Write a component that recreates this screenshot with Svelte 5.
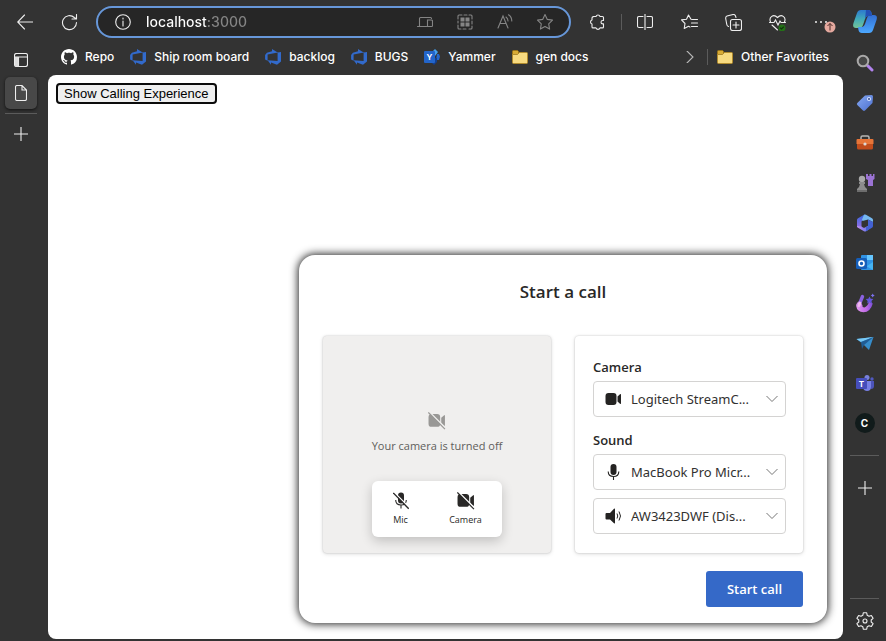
<script>
  const favorites = [
    { name: 'Repo', icon: 'github' },
    { name: 'Ship room board', icon: 'devops' },
    { name: 'backlog', icon: 'devops' },
    { name: 'BUGS', icon: 'devops' },
    { name: 'Yammer', icon: 'yammer' },
    { name: 'gen docs', icon: 'folder' }
  ];
  const apps = ['Search', 'Shopping', 'Tools', 'Games', 'Microsoft 365', 'Outlook', 'Designer', 'Drop', 'Teams', 'Custom app'];
</script>

{#snippet folder()}
  <svg width="16" height="16" viewBox="0 0 16 16"><path d="M.5 2.5q0-1 1-1h4l1 1v3h-6z" fill="#d8ab35" stroke="#9b7417" /><path d="M.5 5.5h5l2-2h7q1 0 1 1v9q0 1-1 1h-13q-1 0-1-1z" fill="#f7da80" stroke="#b08a2c" /></svg>
{/snippet}

{#snippet favicon(kind)}
  {#if kind === 'github'}
    <svg width="16" height="16" viewBox="0 0 16 16"><path fill="#fff" d="M8 0C3.58 0 0 3.58 0 8c0 3.54 2.29 6.53 5.47 7.59.4.07.55-.17.55-.38 0-.19-.01-.82-.01-1.49-2.01.37-2.53-.49-2.69-.94-.09-.23-.48-.94-.82-1.13-.28-.15-.68-.52-.01-.53.63-.01 1.08.58 1.23.82.72 1.21 1.87.87 2.33.66.07-.52.28-.87.51-1.07-1.78-.2-3.64-.89-3.64-3.95 0-.87.31-1.59.82-2.15-.08-.2-.36-1.02.08-2.12 0 0 .67-.21 2.2.82.64-.18 1.32-.27 2-.27s1.36.09 2 .27c1.53-1.04 2.2-.82 2.2-.82.44 1.1.16 1.92.08 2.12.51.56.82 1.27.82 2.15 0 3.07-1.87 3.75-3.65 3.95.29.25.54.73.54 1.48 0 1.07-.01 1.93-.01 2.2 0 .21.15.46.55.38A8.01 8.01 0 0 0 16 8c0-4.42-3.58-8-8-8z" /></svg>
  {:else if kind === 'devops'}
    <svg width="16" height="16" viewBox="0 0 16 16"><path fill="#326acb" d="M16 3v9.500L12 15.800l-6-2.200v2.100l-3.400-4.500 10 .8V3.400zM12.700 3.500 7 0v2.300L1.900 3.800.1 5.900v4.700l2.500 1.100V5.500z" /></svg>
  {:else if kind === 'yammer'}
    <svg width="16" height="16" viewBox="0 0 16 16"><path d="M11 0l3 3-3 4-3-4z" fill="#45a0ee" /><path d="M13 5h2l1 2.500-1 3.500h-3z" fill="#2566c8" /><path d="M7 9h6v4l-3 3-2-2z" fill="#123f91" /><rect y="2" width="11" height="12" rx="1" fill="#2365ca" /><text x="5.500" y="11" text-anchor="middle" fill="#fff" font-family="Inter" font-weight="700" font-size="8">Y</text></svg>
  {:else}
    {@render folder()}
  {/if}
{/snippet}

{#snippet plus()}
  <svg width="14" height="14" viewBox="0 0 14 14" class="line"><path d="M7 0v14M0 7h14" /></svg>
{/snippet}

{#snippet cameraBody()}
  <path d="M3.500 2h5q3 0 3 3v6q0 3-3 3h-5q-3 0-3-3V5q0-3 3-3zM12.500 5.500l2.500-2.300q1-.8 1 .5v8.600q0 1.300-1 .5l-2.500-2.300z" />
{/snippet}

{#snippet cameraOff(back)}
  <svg width="18" height="18" viewBox="0 0 17 17" fill="currentColor">{@render cameraBody()}<path d="M1.300 0 17 15.700" stroke={back} stroke-width="1.500" /><path d="M.3.500 16 16.200" stroke="currentColor" stroke-width="1.200" /></svg>
{/snippet}

{#snippet micShape()}
  <rect x="5" y="0" width="6" height="11" rx="3" /><path d="M2.700 7.500q0 5 5.300 5t5.300-5M8 12.500V16" fill="none" stroke="currentColor" stroke-width="1.100" />
{/snippet}

{#snippet appIcon(i)}
  {#if i === 0}
    <svg width="18" height="18" viewBox="0 0 18 18"><path d="m11.500 11.500 4.500 4.500" stroke="#b283ee" stroke-width="3" stroke-linecap="round" /><circle cx="7" cy="7" r="5.300" fill="#474747" stroke="#aaa9a9" stroke-width="2" /></svg>
  {:else if i === 1}
    <svg width="18" height="18" viewBox="0 0 18 18"><path d="M9 1.500 15.500 1q1.500 0 1.500 1.500L16.500 9 9 16.500q-1 .8-2 0L1.300 11q-1-1 0-2z" fill="url(#tag)" /><circle cx="13" cy="5" r="2" fill="#d9e4ff" /><circle cx="13" cy="5" r="1" fill="#344b8c" /></svg>
  {:else if i === 2}
    <svg width="18" height="18" viewBox="0 0 18 18"><path d="M5 5V3.500Q5 2 6.500 2h5Q13 2 13 3.500V5" fill="none" stroke="#b8b6b4" stroke-width="1.500" /><path d="M1.500 5h15q1 0 1 1v4H.5V6q0-1 1-1z" fill="#e77538" /><path d="M1 10h16v4q0 1.500-1.500 1.500h-13Q1 15.500 1 14z" fill="#c24d1c" /><circle cx="9" cy="10" r="1.600" fill="#dedad7" /></svg>
  {:else if i === 3}
    <svg width="20" height="20" viewBox="0 0 20 20"><path d="M11 1h2v2h1.500V1h2v2H18V1h1.500v5l-1.500 1v6h-5V7l-2-1z" fill="#9b73d4" /><circle cx="7" cy="6" r="3.200" fill="#a9a9a9" /><path d="M4 9h6v2H9l1 3 2 2v3H2v-3l2-2 1-3H4z" fill="#8c8c8c" /><path d="M2 17h10v2H2z" fill="#6d6d6d" /></svg>
  {:else if i === 4}
    <svg width="18" height="18" viewBox="0 0 18 18"><path d="M8.500.5 2 4.200Q1 4.800 1 6v7l4.500 1.500V8q0-1.200 1-1.800L11 3.500z" fill="url(#m365a)" /><path d="M8 .7q1-.5 2 0L16 4.200q1 .6 1 1.800v2l-5-2.500L6.500 7 6 5.500z" fill="#75b8f0" /><path d="M1 12q0 1.200 1 1.800L8 17.300q1 .5 2 0l2.500-1.500-.5-4L9 13.500q-1 .5-2 0L5.500 12.500z" fill="url(#m365b)" /><path d="m12 5.500 5 2.500v4q0 1.200-1 1.800l-6 3.500v-4l2-1.300z" fill="#4361d3" /></svg>
  {:else if i === 5}
    <svg width="18" height="18" viewBox="0 0 18 18"><rect x="5" y="1" width="12" height="15" rx="1" fill="#3093e4" /><path d="M11 1h6v5h-6z" fill="#65c6ff" /><path d="m5 9 12 7V8l-6 4z" fill="#45b3f3" /><rect y="4" width="11" height="11" rx="1.500" fill="#155eb9" /><circle cx="5.500" cy="9.500" r="2.500" fill="none" stroke="#fff" stroke-width="1.600" /></svg>
  {:else if i === 6}
    <svg width="20" height="20" viewBox="0 0 20 20"><path d="M4 8.500Q1 10 1.200 13q.8 6 7.300 6.300 7-.3 9.300-8.800l-3.800-2q-1 4.500-4.500 6Q7 14.500 7.500 12z" fill="url(#design)" /><path d="M7.500 3.500 4 12" stroke="#8b62e0" stroke-width="3.400" stroke-linecap="round" /><path d="m4.800 10.300-.8 2" stroke="#f0b8ef" stroke-width="3.400" stroke-linecap="round" /><path d="m14.500 3.500 1.200 2.200 2.600.3-1.800 2 .5 2.500-2.500-1.200-2.300 1.200.4-2.500-1.900-2 2.600-.3z" fill="#6356dc" /><path d="m17.700.5.7 1.300 1.300.7-1.300.7-.7 1.300-.7-1.300-1.300-.7 1.300-.7z" fill="#7b71ee" /></svg>
  {:else if i === 7}
    <svg width="18" height="18" viewBox="0 0 18 18"><path d="M.5 5 17.500 3 13 16 7 10z" fill="#368dcb" /><path d="M.5 5 17.500 3 5 8z" fill="#79c9f5" /><path d="M5 8 17.500 3 8 11l-2 4z" fill="#205c94" /></svg>
  {:else if i === 8}
    <svg width="18" height="18" viewBox="0 0 18 18"><circle cx="11" cy="3.500" r="2.500" fill="#7881dc" /><circle cx="16" cy="5" r="1.700" fill="#5059c0" /><path d="M7 7h8v6q0 4-4 4-3 0-4-3z" fill="#7880e5" /><path d="M15 7h3v5q0 3-3 3z" fill="#4c54b9" /><rect y="4" width="11" height="11" rx="1" fill="#464ebb" /><text x="5.500" y="12.500" text-anchor="middle" fill="#fff" font-family="Inter" font-weight="700" font-size="8">T</text></svg>
  {:else}
    <span class="letter">C</span>
  {/if}
{/snippet}

<div class="browser">
  <svg class="defs" width="0" height="0" aria-hidden="true">
    <defs>
      <linearGradient id="tag" x2="1" y2="1"><stop stop-color="#86a9f2" /><stop offset="1" stop-color="#4d70cf" /></linearGradient>
      <linearGradient id="m365a" x2="0" y2="1"><stop stop-color="#3566dd" /><stop offset="1" stop-color="#9b70e6" /></linearGradient>
      <linearGradient id="m365b" x2="1" y2="0"><stop stop-color="#c190ef" /><stop offset="1" stop-color="#6674ed" /></linearGradient>
      <linearGradient id="design" x2="1" y2="0"><stop stop-color="#e39af0" /><stop offset=".6" stop-color="#c06ae6" /><stop offset="1" stop-color="#7b4fd6" /></linearGradient>
      <linearGradient id="cop1" x2="0" y2="1"><stop stop-color="#2d79cf" /><stop offset=".5" stop-color="#40aaba" /><stop offset="1" stop-color="#75c496" /></linearGradient>
      <linearGradient id="cop2" x2="0" y2="1"><stop stop-color="#326ed2" /><stop offset="1" stop-color="#4ca8ff" /></linearGradient>
    </defs>
  </svg>

  <div class="main">
    <header class="toolbar">
      <button class="tool" aria-label="Back"><svg width="16" height="16" viewBox="0 0 16 16" class="line"><path d="M7.500 1 .7 8l6.800 7M.7 8H16" /></svg></button>
      <button class="tool" aria-label="Refresh"><svg width="17" height="17" viewBox="0 0 17 17" class="line"><path d="M15.500 8.500a7 7 0 1 1-2.200-5L15.500 5M15.500.5V5H11" /></svg></button>
      <div class="address">
        <svg width="16" height="16" viewBox="0 0 16 16" class="line"><circle cx="8" cy="8" r="7.300" /><path d="M8 7v5M8 4v1" /></svg>
        <input aria-label="Address" value="localhost:3000" spellcheck="false" />
        <button aria-label="Send to device"><svg width="16" height="16" viewBox="0 0 16 16" class="line"><path d="M2.500 12V4.500q0-1 1-1h10q1 0 1 1M.5 12.500h9M10.500 6h4q1 0 1 1v5q0 .5-1 .5h-4z" /></svg></button>
        <button aria-label="QR code"><svg width="16" height="16" viewBox="0 0 16 16" class="line"><path d="M1 5V2q0-1 1-1h3M7 1h3M12 1h2q1 0 1 1v3M15 7v3M15 12v2q0 1-1 1h-2M9 15H6M4 15H2q-1 0-1-1v-3M1 9V7" /><path d="M3.500 3.500h4v4h-4zM8.500 3.500h4v4h-4zM3.500 8.500h4v4h-4zM8.500 8.500h4v4h-4z" fill="currentColor" stroke="none" /></svg></button>
        <button aria-label="Read aloud"><svg width="16" height="16" viewBox="0 0 16 16" class="line"><path d="m1 14 5-12 5 12M3 9.500h6M9 3q2 1.500 2 4M11.500.8Q14.800 3 14.800 7" /></svg></button>
        <button aria-label="Add favorite"><svg width="18" height="18" viewBox="0 0 18 18" class="line"><path d="m9 1.500 2.300 4.900 5.200.7-3.800 3.700.9 5.300L9 13.500l-4.600 2.600.9-5.300L1.500 7.100l5.200-.7z" stroke-linejoin="round" /></svg></button>
      </div>
      <div class="actions">
        <button class="tool narrow" aria-label="Extensions"><svg width="16" height="16" viewBox="0 0 16 16" class="line"><path d="M3 2.500h3a2.100 2.100 0 0 1 4 0h2.500q1 0 1 1v3h-.8a1.700 1.700 0 0 0 0 3.400h.8v3q0 1-1 1H10a2.100 2.100 0 0 1-4 0H3q-1 0-1-1v-3a2.100 2.100 0 0 1 0-4v-2q0-1 1-1z" stroke-linejoin="round" /></svg></button>
        <i class="bar"></i>
        <button class="tool" aria-label="Split screen"><svg width="16" height="16" viewBox="0 0 16 16" class="line"><path d="M8 0v16M6 2.500H2q-1.500 0-1.500 1.500v8q0 1.500 1.500 1.500h4M10 2.500h4q1.500 0 1.500 1.500v8q0 1.500-1.500 1.500h-4" /></svg></button>
        <button class="tool" aria-label="Favorites"><svg width="17" height="17" viewBox="0 0 17 17" class="line"><path d="M16.500 5.500h-5L10 5.200 7.500 1 5.500 5.200l-5 .7L4 9.500l-.8 5 4.300-2.300L9 13M10.500 9h6M10.500 12.500h6" stroke-linejoin="round" /></svg></button>
        <button class="tool" aria-label="Collections"><svg width="17" height="17" viewBox="0 0 17 17" class="line"><rect x="5.500" y="5.500" width="11" height="11" rx="2" /><path d="M11 8v6M8 11h6M3.500 12.500q-1.500-.5-1.700-2L.7 4.500Q.5 2.500 2 2l6-1.500q1.700-.2 2.300 1L11 3.500" /></svg></button>
        <button class="tool" aria-label="Browser essentials"><svg width="17" height="17" viewBox="0 0 17 17" class="line"><path d="M1.500 8C-.5 3 4.500-.5 8.500 3.500c4-4 9-.5 7 4.500M3 11l5.500 5M.5 8.500H5L6.500 6l2.500 5 2-4 1 1.500h4.500" /><circle cx="13" cy="14" r="3.500" fill="#247018" stroke="none" /><path d="m11.500 14 1 1 2-2" stroke="#10350b" /></svg></button>
        <button class="tool" aria-label="Settings and more"><svg width="30" height="24" viewBox="0 0 30 24"><g fill="#eee"><circle cx="10" cy="12" r="1" /><circle cx="15" cy="12" r="1" /><circle cx="20" cy="12" r="1" /></g><circle cx="24" cy="17" r="5.500" fill="#e5a99f" /><path d="M24 20.500v-7m-2.500 2.500 2.500-2.500 2.500 2.500" fill="none" stroke="#4d2a26" /></svg></button>
      </div>
    </header>

    <div class="body">
      <nav class="tabs" aria-label="Tabs">
        <button class="tabmenu" aria-label="Tab actions"><svg width="14" height="14" viewBox="0 0 14 14" class="line"><rect x=".5" y=".5" width="13" height="13" rx="2" /><path d="M.5 4h13M4.500 4v9.500" /><path d="M1 4h3.500v9.500H2q-1 0-1-1z" fill="#ddd" stroke="none" /></svg></button>
        <button class="tab" aria-label="Current tab"><svg width="12" height="16" viewBox="0 0 12 16" class="line"><path d="M.5 2Q.5.500 2 .5h5L11.500 5v9q0 1.500-1.500 1.500H2Q.5 15.500.5 14zM7 .5V5h4.500" /></svg></button>
        <hr />
        <button class="newtab" aria-label="New tab">{@render plus()}</button>
      </nav>

      <div class="view">
        <nav class="favorites" aria-label="Favorites">
          {#each favorites as f}
            <a href="#{f.icon}">{@render favicon(f.icon)}{f.name}</a>
          {/each}
          <div class="overflow">
            <button aria-label="More favorites"><svg width="8" height="12" viewBox="0 0 8 12" class="line"><path d="m1 0 6 6-6 6" stroke="#b8b8b8" /></svg></button>
            <i class="bar short"></i>
            <a href="#other">{@render folder()}Other Favorites</a>
          </div>
        </nav>

        <main class="page">
          <button class="show">Show Calling Experience</button>

          <div class="dialog" role="dialog" aria-labelledby="dialog-title">
            <h1 id="dialog-title">Start a call</h1>
            <div class="panels">
              <section class="card preview">
                <div class="off">
                  {@render cameraOff('#f0efee')}
                  <p>Your camera is turned off</p>
                </div>
                <div class="controls">
                  <button>
                    <svg width="16" height="18" viewBox="0 0 16 17" fill="currentColor">{@render micShape()}<path d="M1.300 0 17 15.700" stroke="#fff" stroke-width="1.500" /><path d="M.3.500 15.700 16.200" stroke="currentColor" stroke-width="1.300" /></svg>
                    Mic
                  </button>
                  <button>{@render cameraOff('#fff')}Camera</button>
                </div>
              </section>

              <section class="card devices">
                <label for="camera">Camera</label>
                <div class="field">
                  <svg width="17" height="16" viewBox="0 0 17 16" fill="currentColor">{@render cameraBody()}</svg>
                  <select id="camera"><option>Logitech StreamC...</option></select>
                </div>
                <label for="mic">Sound</label>
                <div class="field">
                  <svg width="17" height="16" viewBox="0 0 16 16" fill="currentColor">{@render micShape()}</svg>
                  <select id="mic"><option>MacBook Pro Micr...</option></select>
                </div>
                <div class="field">
                  <svg width="17" height="16" viewBox="0 0 17 16" fill="currentColor"><path d="M1.500 5H5L9 .8q1-.8 1 .5v13.400q0 1.300-1 .5L5 11.500H1.500q-1 0-1-1V6q0-1 1-1z" /><path d="M12 5.500q1.500 2.500 0 5M14 3.500q3 4.500 0 9" fill="none" stroke="currentColor" /></svg>
                  <select aria-label="Speaker"><option>AW3423DWF (Dis...</option></select>
                </div>
              </section>
            </div>
            <button class="start">Start call</button>
          </div>
        </main>
      </div>
    </div>
  </div>

  <aside class="sidebar">
    <button class="copilot" aria-label="Copilot"><svg width="24" height="23" viewBox="0 0 24 23"><path d="M8 0h7q3 0 3.500 3L19 6h-4q-2 0-3 3l-2 6q-1 3-4 3H3q-4 0-2.500-5L4 3q1-3 4-3z" fill="url(#cop1)" /><path d="M16 23H9q-3 0-3.500-3L5 17h4q2 0 3-3l2-6q1-3 4-3h3q4 0 2.500 5L20 20q-1 3-4 3z" fill="url(#cop2)" /><path d="M13 0h2q3 0 3.500 3L19 6h-4q-2 0-3 3z" fill="#234fb5" /></svg></button>
    {#each apps as app, i}
      <button aria-label={app}>{@render appIcon(i)}</button>
    {/each}
    <hr />
    <button aria-label="Customize">{@render plus()}</button>
    <div class="bottom">
      <hr />
      <button aria-label="Settings"><svg width="18" height="18" viewBox="0 0 18 18" class="line"><path d="M7.300.8h3.400l.5 2.500 1.800 1 2.400-.8 1.700 2.900L15.200 8v2l1.900 1.600-1.700 2.900-2.400-.8-1.800 1-.5 2.500H7.300l-.5-2.500-1.800-1-2.400.8-1.700-2.900L2.800 10V8L.9 6.400l1.700-2.900 2.400.8 1.800-1z" stroke-linejoin="round" /><circle cx="9" cy="9" r="2" /></svg></button>
    </div>
  </aside>
</div>

<style>
  :global(body) { background: #333; }
  * { box-sizing: border-box; }
  button { border: 0; padding: 0; background: none; color: inherit; font: inherit; display: grid; place-items: center; }
  svg { display: block; flex: none; }
  hr { border: 0; height: 1px; background: #5b5b5b; margin: 0; }
  .defs { position: absolute; }
  .line { fill: none; stroke: currentColor; stroke-width: 1.1; stroke-linecap: round; }

  .browser { display: flex; min-height: 100vh; background: #333; color: #eee; font: 500 12px/16px Inter, sans-serif; }
  .main { flex: 1; min-width: 0; display: flex; flex-direction: column; }
  .toolbar { display: flex; align-items: center; height: 44px; padding-left: 3px; }
  .tool { width: 44px; height: 32px; }
  .narrow { width: 36px; }
  .address { flex: 1; min-width: 0; display: flex; align-items: center; height: 32px; margin-left: 5px; padding: 0 4px 0 17px; border: 2px solid #6797d9; border-radius: 16px; background: #262626; }
  .address input { flex: 1; min-width: 0; height: 24px; margin-left: 15px; padding: 0; border: 0; outline: 0; font: 500 14px/24px Inter, sans-serif; color: transparent; caret-color: #fff; background: linear-gradient(90deg, #fff 61px, #858585 61px); background-clip: text; -webkit-background-clip: text; }
  .address button { width: 40px; height: 24px; color: #858585; }
  .actions { display: flex; align-items: center; padding-left: 9px; }
  .bar { width: 1px; height: 16px; margin: 0 1px 0 5px; background: #5b5b5b; }

  .body { flex: 1; display: flex; }
  .tabs { width: 48px; padding: 0 11px 0 5px; display: flex; flex-direction: column; }
  .tabmenu { height: 31px; }
  .tab { height: 32px; margin: 2px 0 4px; border-radius: 5px; background: #484848; box-shadow: 0 1px 3px #111; }
  .newtab { height: 40px; }

  .view { flex: 1; min-width: 0; display: flex; flex-direction: column; }
  .favorites { display: flex; align-items: center; gap: 16px; height: 31px; padding: 0 14px 5px 13px; white-space: nowrap; }
  .favorites a { display: flex; align-items: center; gap: 8px; color: #fff; text-decoration: none; }
  .overflow { margin-left: auto; display: flex; align-items: center; gap: 9px; }
  .short { margin: 0 0 0 4px; }

  .page { position: relative; flex: 1; margin-bottom: 2px; padding: 8px; border-radius: 8px; background: #fff; color: #000; }
  .show { height: 21px; padding: 0 6px; border: 2px solid #0b0b0b; border-radius: 4px; background: #efefef; font: 13px/17px "Liberation Sans", Arial, sans-serif; }

  .dialog { position: absolute; right: 16px; bottom: 16px; width: 528px; max-width: 100%; padding: 24px 24px 16px; border-radius: 16px; background: #fff; color: #292827; box-shadow: 0 0 8px 1px #222; font: 14px/20px "Open Sans", sans-serif; }
  h1 { margin: 0 0 31px; font-size: 17px; line-height: 26px; font-weight: 600; text-align: center; }
  .panels { display: grid; grid-template-columns: 1fr 1fr; gap: 24px; }
  .card { min-width: 0; height: 217px; border-radius: 4px; box-shadow: 0 0 2px #0003, 0 1px 4px #0002; }
  .preview { display: flex; flex-direction: column; align-items: center; justify-content: flex-end; padding-bottom: 16px; background: #f0efee; }
  .off { display: flex; flex-direction: column; align-items: center; gap: 8px; color: #999896; }
  .off p { margin: 0 0 27px; font-size: 11px; line-height: 16px; color: #605e5c; }
  .controls { display: grid; grid-template-columns: 57px 73px; height: 56px; border-radius: 6px; background: #fff; box-shadow: 0 4px 12px #0003; }
  .controls button { display: flex; flex-direction: column; align-items: center; justify-content: center; gap: 3px; font-size: 9px; line-height: 14px; }
  .devices { padding: 21px 17px 0 18px; }
  .devices label { display: block; margin-bottom: 4px; font-size: 13px; line-height: 20px; font-weight: 600; }
  .field { display: grid; grid-template-columns: 1fr; align-items: center; height: 36px; margin-bottom: 8px; color: #242322; }
  .field > * { grid-area: 1 / 1; }
  .field svg { z-index: 1; margin-left: 12px; pointer-events: none; }
  .field select { appearance: none; width: 100%; height: 36px; padding: 0 24px 0 37px; border: 1px solid #d4d3d2; border-radius: 4px; color: #323130; font: 13px/20px "Noto Sans", sans-serif; background: #fff url("data:image/svg+xml,%3Csvg xmlns='http://www.w3.org/2000/svg' width='12' height='8'%3E%3Cpath d='M.5 1 6 6.500 11.500 1' fill='none' stroke='%23777'/%3E%3C/svg%3E") no-repeat right 7px center; }
  .field + label { margin-top: 13px; }
  .start { width: 97px; height: 36px; margin: 18px 0 0 auto; border-radius: 3px; background: #3569c8; color: #fff; font-size: 13px; font-weight: 600; }

  .sidebar { width: 43px; display: flex; flex-direction: column; }
  .sidebar button { width: 100%; height: 40px; }
  .sidebar .copilot { height: 43px; }
  .sidebar hr { margin: 12px 7px; }
  .bottom { margin-top: auto; }
  .bottom hr { margin: 0 7px 2px; }
  .letter { width: 20px; height: 20px; border-radius: 50%; background: #111b1b; color: #fff; font-size: 10px; line-height: 20px; text-align: center; font-weight: 700; }
</style>
